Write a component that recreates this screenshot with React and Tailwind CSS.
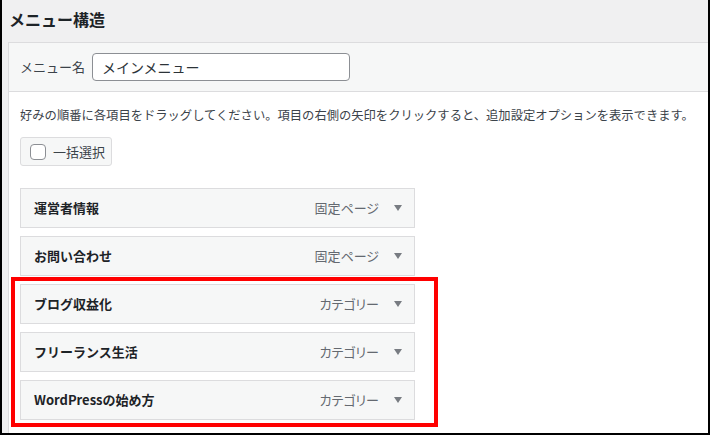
import React from "react";

const FONT = { fontFamily: '"Noto Sans CJK JP", "Noto Sans", sans-serif' };

const ITEMS = [
    { title: "運営者情報", type: "固定ページ" },
    { title: "お問い合わせ", type: "固定ページ" },
    { title: "ブログ収益化", type: "カテゴリー" },
    { title: "フリーランス生活", type: "カテゴリー" },
    { title: "WordPressの始め方", type: "カテゴリー" },
];

function MenuItem({ title, type }) {
    return (
        <div className="w-[395px] h-10 flex items-center border border-[#dcdcde] bg-[#f6f7f7] pl-[13px] pr-[12px]">
            <span className="flex-1 text-[13px] font-bold text-[#1d2327]">{title}</span>
            <span className="text-[13px] text-[#646970] [font-feature-settings:'palt']">{type}</span>
            <svg width="8" height="6" viewBox="0 0 8 6" className="ml-[15px]">
                <path d="M0 0 H8 L4 6 Z" fill="#787c82" />
            </svg>
        </div>
    );
}

export default function App() {
    return (
        <div
            style={FONT}
            className="relative w-[710px] h-[435px] overflow-hidden bg-[#f0f0f1] border-x-2 border-b-2 border-black flex flex-col"
        >
            {/* Heading */}
            <div className="h-[42px] pl-[7px] pt-[7px] shrink-0">
                <h2 className="text-[16px] leading-[24px] font-bold text-[#1d2327]">メニュー構造</h2>
            </div>

            {/* Panel */}
            <div className="ml-[6px] w-[720px] flex-1 border border-r-0 border-b-0 border-[#dcdcde] bg-white">
                <div className="h-[49px] flex items-center pl-[11px] bg-[#f6f7f7] border-b border-[#dcdcde]">
                    <span className="w-[72px] text-[13px] text-[#3c434a]">メニュー名</span>
                    <input
                        readOnly
                        value="メインメニュー"
                        style={FONT}
                        className="w-[258px] h-[28px] px-[9px] text-[14px] text-[#2c3338] bg-white border border-[#8c8f94] rounded-[4px] outline-none"
                    />
                </div>

                <div className="pl-[11px]">
                    <p className="mt-[13px] text-[12.3px] leading-[20px] text-[#3c434a] whitespace-nowrap">
                        好みの順番に各項目をドラッグしてください。項目の右側の矢印をクリックすると、追加設定オプションを表示できます。
                    </p>

                    <div className="mt-[12px] w-[92px] h-[29px] flex items-center gap-[7px] pl-[9px] bg-[#f6f7f7] border border-[#dcdcde] rounded-[3px]">
                        <span className="w-4 h-4 rounded-[4px] border border-[#8c8f94] bg-white" />
                        <span className="text-[13px] text-[#3c434a]">一括選択</span>
                    </div>

                    <div className="mt-[22px] flex flex-col gap-2">
                        {ITEMS.map(item => (
                            <MenuItem key={item.title} {...item} />
                        ))}
                    </div>
                </div>
            </div>

            {/* Highlight annotation */}
            <div className="absolute left-[9px] top-[277px] w-[427px] h-[150px] border-4 border-[#ff0000] pointer-events-none" />
        </div>
    );
}
